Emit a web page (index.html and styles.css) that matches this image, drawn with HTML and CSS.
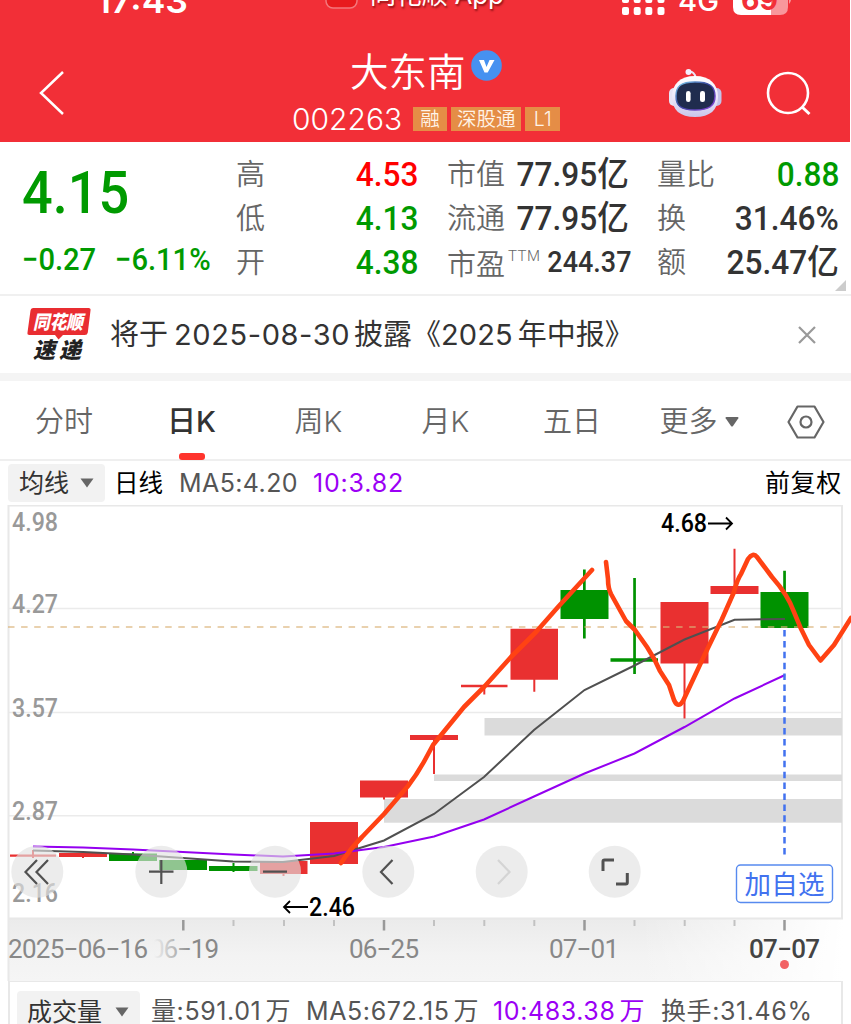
FILE: index.html
```html
<!DOCTYPE html>
<html lang="zh-CN">
<head>
<meta charset="utf-8">
<title>大东南 002263</title>
<link rel="stylesheet" href="styles.css">
</head>
<body>
<main class="app">
  <header class="header">
    <svg class="status" width="850" height="20" viewBox="0 0 850 20">
      <text x="96" y="13" class="clock" textLength="92" lengthAdjust="spacingAndGlyphs">17:43</text>
      <rect x="326" y="-20" width="31" height="28" rx="7" fill="#e81b1e" stroke="#f4777b" stroke-width="1.5"/>
      <text x="370" y="4" class="appname" textLength="134">同花顺 App</text>
      <g fill="#fff">
        <rect x="622" y="-4" width="7" height="7" rx="2"/><rect x="633.700" y="-4" width="7" height="7" rx="2"/><rect x="645.300" y="-4" width="7" height="7" rx="2"/><rect x="657.500" y="-4" width="7" height="7" rx="2"/>
        <rect x="622" y="7" width="7" height="8" rx="2"/><rect x="633.700" y="7" width="7" height="8" rx="2"/><rect x="645.300" y="7" width="7" height="8" rx="2"/><rect x="657.500" y="7" width="7" height="8" rx="2"/>
      </g>
      <text x="678" y="11" class="network" textLength="41" lengthAdjust="spacingAndGlyphs">4G</text>
      <path d="M771-12h9q8 0 8 8V7q0 8-8 8h-9z" fill="#f8979b"/>
      <path d="M771-12h-30q-8 0-8 8V7q0 8 8 8h30z" fill="#fff"/>
      <path d="M789-4q4 3 0 8z" fill="#f8979b"/>
      <text x="741" y="10" class="battery" textLength="37" lengthAdjust="spacingAndGlyphs">69</text>
    </svg>
    <div class="titlebar">
      <svg class="back" width="30" height="48" viewBox="0 0 30 48"><path d="M26 3L4 24l22 21" fill="none" stroke="#fff" stroke-width="2.500"/></svg>
      <div class="stock">
        <div class="stock-name"><span>大东南</span><svg width="31" height="31" viewBox="0 0 31 31"><circle cx="15.500" cy="15.500" r="15.300" fill="#4691f0"/><path d="M8 10h5l2.500 7L18.500 10H23.500L16.700 22.500H13.500z" fill="#fff"/></svg></div>
        <div class="stock-code"><span class="code">002263</span><span class="tag t1">融</span><span class="tag t2">深股通</span><span class="tag t3">L1</span></div>
      </div>
      <svg class="robot" width="54" height="50" viewBox="668 67 54 50">
        <defs>
          <linearGradient id="shell" x2="0" y2="1"><stop offset="0" stop-color="#fff"/><stop offset=".5" stop-color="#eeeafa"/><stop offset="1" stop-color="#c9c5ea"/></linearGradient>
          <linearGradient id="rim" x2="1" y2="1"><stop offset="0" stop-color="#7ed0f0"/><stop offset=".45" stop-color="#3848a0"/><stop offset="1" stop-color="#8c42d8"/></linearGradient>
        </defs>
        <path d="M688 71q7-1 7.500 6" fill="none" stroke="#ebe4f5" stroke-width="2"/><circle cx="688.500" cy="71" r="3" fill="#f4efff"/>
        <rect x="669" y="87" width="10" height="18" rx="5" fill="#e7e4f5"/><rect x="711" y="87" width="10.500" height="18" rx="5" fill="#c4c3e8"/>
        <path d="M695 75c15 0 23 8 23 21s-8 20-23 20-23-7-23-20 8-21 23-21z" fill="url(#shell)"/>
        <path d="M695 81c14 0 20 4 20 14s-6 14-20 14-19-4-19-14 5-14 19-14z" fill="#202c4e" stroke="url(#rim)" stroke-width="1.500"/>
        <rect x="686" y="90" width="4.600" height="11" rx="2.300" fill="#fff"/><rect x="700" y="90" width="5" height="11" rx="2.300" fill="#fff"/>
      </svg>
      <svg class="search" width="48" height="48" viewBox="764 69 48 48"><circle cx="788" cy="92" r="20" fill="none" stroke="#fff" stroke-width="2.600"/><path d="M802 106l7.500 7" stroke="#fff" stroke-width="3"/></svg>
    </div>
  </header>

  <section class="quote">
    <div class="price">
      <div class="last">4.15</div>
      <div class="change"><span>−0.27</span><span>−6.11%</span></div>
    </div>
    <dl class="stats">
      <div><dt>高</dt><dd class="up">4.53</dd></div>
      <div><dt>低</dt><dd class="down">4.13</dd></div>
      <div><dt>开</dt><dd class="down">4.38</dd></div>
    </dl>
    <dl class="stats">
      <div><dt>市值</dt><dd>77.95<i>亿</i></dd></div>
      <div><dt>流通</dt><dd>77.95<i>亿</i></dd></div>
      <div class="pe"><dt>市盈<sup>TTM</sup></dt><dd>244.37</dd></div>
    </dl>
    <dl class="stats">
      <div><dt>量比</dt><dd class="down">0.88</dd></div>
      <div><dt>换</dt><dd>31.46%</dd></div>
      <div><dt>额</dt><dd>25.47<i>亿</i></dd></div>
    </dl>
    <svg class="corner" width="11" height="11" viewBox="0 0 11 11"><path d="M11 0v11H0z" fill="#ccc"/></svg>
  </section>

  <section class="notice">
    <svg width="66" height="56" viewBox="26 306 66 56">
      <path d="M33 307h55.500q2.500 0 2 2.500l-2.700 22q-.4 2.500-3 2.500H63l-4.500 4.500L55 334H29.500q-2.500 0-2-2.500l3-22q.3-2.500 2.500-2.500z" fill="#e92d31"/>
      <text x="33" y="328" class="logo-top" textLength="50" lengthAdjust="spacingAndGlyphs">同花顺</text>
      <text x="33" y="357" class="logo-bottom" textLength="48">速递</text>
    </svg>
    <p><span>将于</span><span class="num date">2025-08-30</span><span>披露《</span><span class="num">2025</span><span class="report">年中报》</span></p>
    <svg class="close" width="18" height="18" viewBox="0 0 18 18"><path d="M1 1l16 16M17 1L1 17" stroke="#999" stroke-width="2.200"/></svg>
  </section>

  <nav class="tabs">
    <a>分时</a><a class="active">日K</a><a>周K</a><a>月K</a><a>五日</a>
    <a class="more">更多<svg width="14" height="10" viewBox="0 0 14 10"><path d="M1.500 0h11q1.500 0 .8 1.200L8 9q-1 1-2 0L.7 1.200Q0 0 1.500 0z" fill="#666"/></svg></a>
    <a class="gear"><svg width="38" height="34" viewBox="0 0 38 34"><path d="M10.500 1.500h17L36.500 17l-9 15.500h-17L1.500 17z" fill="none" stroke="#666" stroke-width="2.200" stroke-linejoin="round"/><circle cx="19" cy="17" r="5.500" fill="none" stroke="#666" stroke-width="2.200"/></svg></a>
  </nav>

  <section class="ma">
    <span class="chip">均线<svg width="14" height="10" viewBox="0 0 14 10"><path d="M.5.5h13L7 9.500z" fill="#666"/></svg></span>
    <b>日线</b><span class="ma5">MA5:4.20</span><span class="ma10">10:3.82</span><span class="adjust">前复权</span>
  </section>

  <svg class="chart" width="851" height="476" viewBox="0 505 851 476">
    <defs>
      <linearGradient id="axis" x2="0" y2="1"><stop offset="0" stop-color="#ebebeb"/><stop offset=".6" stop-color="#f3f3f3"/><stop offset="1" stop-color="#f5f5f5"/></linearGradient>
      <linearGradient id="fade"><stop offset="0" stop-color="#fff" stop-opacity="0"/><stop offset="1" stop-color="#fff"/></linearGradient>
      <linearGradient id="datefade" gradientUnits="userSpaceOnUse" x1="154" x2="192" y1="0" y2="0"><stop offset="0" stop-color="#888" stop-opacity="0"/><stop offset="1" stop-color="#888"/></linearGradient>
    </defs>
    <rect x="8" y="919" width="835" height="62" fill="url(#axis)"/>
    <rect x="640" y="919" width="203" height="62" fill="url(#fade)"/>
    <path d="M8 608.500H842M8 712.500H842M8 815.700H842" stroke="#ebebeb" stroke-width="1.500"/>
    <path d="M8.500 981V505.500H842V918.500H8.500" fill="none" stroke="#e8e8e8" stroke-width="2"/>
    <g fill="#dbdbdb"><rect x="484.500" y="718" width="357.500" height="17.500"/><rect x="434" y="774.500" width="408" height="6.500"/><rect x="384" y="799" width="458" height="23.700"/></g>
    <g class="scale">
      <text x="12" y="531" textLength="46" lengthAdjust="spacingAndGlyphs">4.98</text>
      <text x="12" y="612.500" textLength="46" lengthAdjust="spacingAndGlyphs">4.27</text>
      <text x="12" y="716.500" textLength="46" lengthAdjust="spacingAndGlyphs">3.57</text>
      <text x="12" y="820" textLength="46" lengthAdjust="spacingAndGlyphs">2.87</text>
      <text x="12" y="901.500" textLength="46" lengthAdjust="spacingAndGlyphs">2.16</text>
    </g>
    <g fill="#e93030">
      <path d="M10 854.500h46v2.300H10zM32 850h2v8h-2zM59 853h48v4H59zM82 857h2v1h-2z"/>
      <path d="M260 861h47.500v13H260zM282.500 874h2v2h-2zM310 822h48v42h-48zM360 780.500h48v17h-48zM383 797h2v2.500h-2z"/>
      <path d="M410 735h48v5h-48zM433 740h2v34h-2zM461 684.700h46.500v2.500H461zM483.300 687h2v7.500h-2zM510.500 628.700H558v51h-47.500zM533.300 679h2v12.700h-2z"/>
      <path d="M660.500 602h48v61.500h-48zM683.500 663h2v55.500h-2zM710.500 586h48v8h-48zM733.500 548.700h2v38h-2z"/>
    </g>
    <g fill="#009200">
      <path d="M109 853.500h48v7.500h-48zM132 852h2v3h-2zM159 860h48v10h-48zM209 866h48.500v5H209zM232.500 863h2v9h-2z"/>
      <path d="M560.500 590h48v29h-48zM583 569.500h2.700v69H583zM610.500 658.300H658v3.500h-47.500zM633.200 578h2.700v96h-2.700zM760.500 592h48v36h-48zM783.200 570.700h2.700V592h-2.700z"/>
    </g>
    <path d="M8 627H842" stroke="#dab278" stroke-opacity=".8" stroke-width="1.500" stroke-dasharray="6.500 6.600"/>
    <path d="M33 850.500L83 852 133 854.500 183 858 233 861.500 283 862 334 856 384 840.500 434 814 484 777 534 730 584.500 690 634.500 665.500 684.500 639.500 734.500 619.700 785 619" fill="none" stroke="#505050" stroke-width="2"/>
    <path d="M33 846.500L83 847.500 133 849.500 183 852 233 854.500 283 856.500 334 853.500 384 847 434 836.500 484 819.500 534 796.500 584.500 773.500 634.500 753.500 684.500 727 734.500 698.500 785 675" fill="none" stroke="#9400f0" stroke-width="2"/>
    <path d="M784.500 630V856" stroke="#4272ef" stroke-width="2.500" stroke-dasharray="6.500 4.400"/>
    <g fill="none" stroke="#ff4213" stroke-width="4.600" stroke-linecap="round" stroke-linejoin="round">
      <path d="M341 863Q351 848 362 837L384 814 408 786Q418 773 426 758L433 745 446 729 464 707 484 687 511 657 536 632 558 607 592 570"/>
      <path d="M606 562L608 579Q608 588 611 594L626 621 635 630 647 647Q655 659 660 671L669 685 674 700Q678 709 683 701L705 654 722 619 734 592Q737 580 741 574L748 559Q753 552 757 557L772 577Q788 595 794 612 800 628 809 645L820.500 660.500 834 645 851 618"/>
    </g>
    <g class="mark">
      <text x="661" y="532" textLength="46" lengthAdjust="spacingAndGlyphs">4.68</text>
      <text x="309" y="916" textLength="46" lengthAdjust="spacingAndGlyphs">2.46</text>
      <path d="M708 523.500H731.500M726 517.500L732 523.500 726 529.500M308 907H284.500M290 901L284 907 290 913" fill="none" stroke="#000" stroke-width="1.800"/>
    </g>
    <g fill="#e1e1e1" fill-opacity=".64"><circle cx="37.300" cy="871.700" r="26"/><circle cx="161.300" cy="871.700" r="26"/><circle cx="275" cy="871.700" r="26"/><circle cx="388.300" cy="871.700" r="26"/><circle cx="501.700" cy="871.700" r="26"/><circle cx="614.700" cy="871.700" r="26"/></g>
    <g fill="none" stroke="#515151" stroke-width="2.200">
      <path d="M37 860L25.500 872 37 884M48 860L36.500 872 48 884M392.500 860L381 872 392.500 884"/>
      <path d="M149 871.700H173.500M161.300 860V884M263 871.700H287"/>
      <path d="M498 860L509.500 872 498 884" stroke="#d4d4d4"/>
      <path d="M603 871V861.500Q603 860 604.500 860H614M627.300 873V882.500Q627.300 884 625.800 884H616" stroke-width="3"/>
    </g>
    <rect x="736.500" y="865" width="96" height="37.500" rx="4" fill="#fff" stroke="#578aef" stroke-width="1.400"/>
    <text x="744.500" y="894" class="add" textLength="80">加自选</text>
    <path d="M183.300 920v10.500M384 920v10.500M584.500 920v10.500M784.500 920v10.500" stroke="#999" stroke-width="2.500"/>
    <path d="M233.500 920v6M284 920v6M334 920v6M434 920v6M484.300 920v6M534.300 920v6M634.500 920v6M684.700 920v6M734.500 920v6" stroke="#c2c2c2" stroke-width="2"/>
    <g class="dates">
      <text x="8" y="958" textLength="140">2025−06−16</text>
      <text x="150" y="958" textLength="69" fill="url(#datefade)">06−19</text>
      <text x="349" y="958" textLength="70">06−25</text>
      <text x="549" y="958" textLength="70">07−01</text>
      <text x="749" y="958" textLength="71" class="today">07−07</text>
    </g>
    <circle cx="784.500" cy="964.500" r="4.500" fill="#f26264"/>
  </svg>

  <section class="volume">
    <span class="chip">成交量<svg width="14" height="10" viewBox="0 0 14 10"><path d="M.5.5h13L7 9.500z" fill="#666"/></svg></span>
    <span class="vol">量:591.01<i>万</i></span><span class="vma5">MA5:672.15<i>万</i></span><span class="vma10">10:483.38<i>万</i></span><span class="turn">换手:31.46%</span>
  </section>
</main>
</body>
</html>
```

FILE: styles.css
```css
* { box-sizing: border-box; }
body { margin: 0; background: #fff; font-family: Inter, "Noto Sans CJK SC", sans-serif; color: #333; }
.app { width: 851px; height: 1024px; overflow: hidden; }
svg { display: block; flex: none; }
i { font-style: normal; }

.header { width: 850px; height: 142px; background: #f22f37; color: #fff; }
.status text { fill: #fff; }
.status .clock { font-size: 34px; font-weight: 600; }
.status .appname { font-size: 26px; font-weight: 400; text-shadow: 1px 2px 2px rgba(80, 0, 0, .6); }
.status .network { font-size: 28px; font-weight: 500; }
.status .battery { font-size: 28px; font-weight: 700; fill: #f22f37; }
.titlebar { display: flex; padding-left: 37px; height: 122px; }
.back { margin-top: 49px; }
.stock { width: 272px; margin-left: 225px; }
.stock-name { display: flex; gap: 5px; height: 78px; padding: 25px 0 0 58px; font-size: 38.500px; font-weight: 350; line-height: 54px; white-space: nowrap; }
.stock-name svg { margin-top: 5px; }
.stock-code { display: flex; align-items: center; height: 41px; }
.code { width: 122px; font-size: 30px; font-weight: 350; }
.tag { height: 24px; margin-right: 4px; background: #e58d46; color: #fff4e8; font-size: 19.500px; font-weight: 350; line-height: 24px; text-align: center; white-space: nowrap; }
.t1 { width: 35px; }
.t2 { width: 71px; }
.t3 { width: 35px; }
.robot { margin: 48px 0 0 104px; }
.search { margin: 50px 0 0 42px; }

.quote { position: relative; display: grid; grid-template-columns: 214px 211px 210px 181px; height: 154px; padding: 10px 0 0 22px; border-bottom: 2px solid #f0f0f0; font-family: Roboto, "Noto Sans CJK SC", sans-serif; }
.price { color: #009a00; font-weight: 500; }
.last { height: 84px; font-size: 60px; line-height: 82px; transform: scaleX(.9); transform-origin: left; }
.change { display: flex; gap: 14px; font-size: 31px; line-height: 47px; }
.change span { transform: scaleX(.94); transform-origin: left; }
.stats { width: 182px; margin: 0; }
.stats div { display: flex; justify-content: space-between; height: 44px; line-height: 44px; white-space: nowrap; }
.stats dt { padding-top: 1px; color: #666; font-size: 29px; font-weight: 350; }
.stats dd { margin: 0; font-size: 34px; font-weight: 500; color: #333; transform: scaleX(.93); transform-origin: right; }
.stats .up { color: #f00; }
.stats .down { color: #009a00; }
.stats sup { display: inline-block; margin-left: 3px; font-size: 15px; line-height: 15px; vertical-align: 14px; letter-spacing: .5px; }
.stats .pe dt { width: 96px; padding-top: 3px; }
.stats .pe dd { font-size: 29px; }
.corner { position: absolute; right: 5px; bottom: 3px; }

.notice { display: flex; align-items: center; height: 85px; padding: 0 35px 0 26px; border-bottom: 8px solid #f4f4f4; }
.notice p { display: flex; margin: 0 auto 0 18px; font-size: 29px; line-height: 44px; white-space: nowrap; }
.notice .num { letter-spacing: .1px; }
.notice .date { width: 180px; margin-left: 6px; letter-spacing: .6px; }
.report { margin-left: 5px; }
.logo-top, .logo-bottom { font-family: "Noto Sans CJK SC", sans-serif; font-weight: 900; font-size: 19px; fill: #fff; font-style: italic; }
.logo-bottom { font-size: 22px; fill: #222; }

.tabs { display: grid; grid-template-columns: 128px 127px 127px 127px 126px 128px 86px; height: 80px; border-bottom: 2px solid #efefef; font-size: 29px; font-weight: 350; line-height: 82px; text-align: center; color: #666; }
.tabs .active { font-weight: 500; color: #333; }
.tabs .active::after { content: ""; display: block; width: 26px; height: 7px; margin: -10px auto 0; border-radius: 3px; background: #ff342d; }
.more { display: flex; align-items: center; justify-content: center; gap: 7px; }
.gear { display: grid; place-items: center; }

.ma { display: flex; height: 44px; padding: 3px 9px 0 8px; font-size: 25px; line-height: 39px; white-space: nowrap; }
.chip { display: flex; align-items: center; gap: 11px; height: 38px; padding-left: 11px; border-radius: 4px; background: #f2f2f2; color: #333; }
.ma .chip { width: 97px; }
.ma b { width: 65px; margin-left: 9px; font-size: 24.500px; font-weight: 400; color: #000; }
.ma5 { width: 134px; color: #555; letter-spacing: .4px; }
.ma10 { color: #9b00f5; letter-spacing: .8px; }
.adjust { margin-left: auto; color: #000; letter-spacing: .7px; }

.scale text, .mark text, .dates text { font-family: Roboto, sans-serif; font-size: 26px; }
.scale { fill: #999; font-weight: 500; }
.mark { fill: #000; font-weight: 500; }
.dates { fill: #888; }
.dates .today { fill: #444; font-weight: 500; }
.add { font-family: "Noto Sans CJK SC", sans-serif; font-size: 26.500px; fill: #4272ef; }

.volume { display: flex; width: 835px; height: 43px; margin-left: 8px; padding: 9px 0 0 7px; border: solid #e8e8e8; border-width: 1px 2px 0; font-size: 25px; line-height: 40px; white-space: nowrap; color: #555; letter-spacing: .6px; }
.volume .chip { width: 123px; height: 42px; margin-right: 11px; padding-left: 10px; gap: 13px; letter-spacing: 0; }
.volume i { margin-left: 4px; }
.vol { width: 155px; }
.vma5 { width: 187px; }
.vma10 { width: 168px; color: #9b00f5; }
```
